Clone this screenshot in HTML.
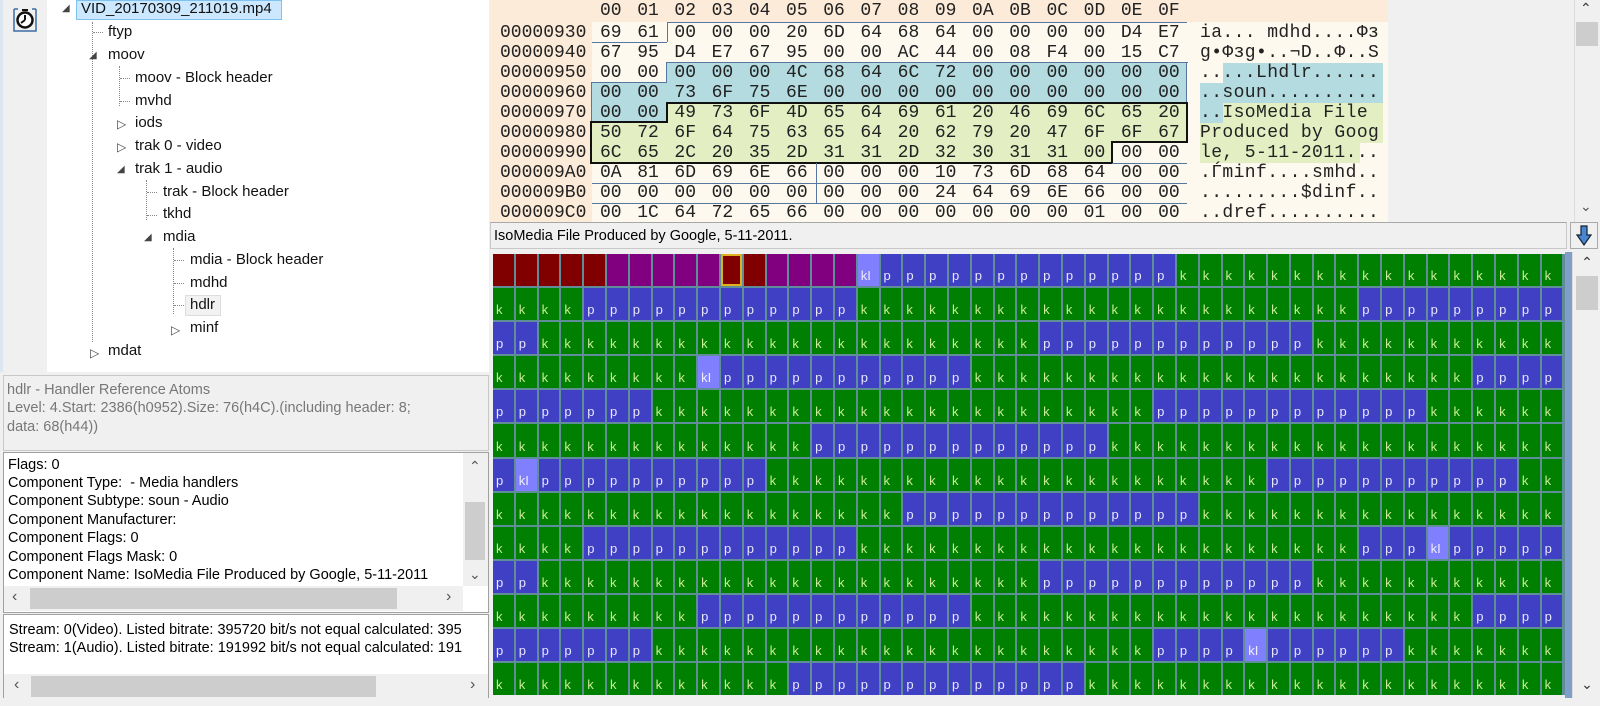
<!DOCTYPE html>
<html><head><meta charset="utf-8">
<style>
*{box-sizing:border-box;margin:0;padding:0}
body{width:1600px;height:706px;overflow:hidden;background:#f0f0f0;font-family:"Liberation Sans",sans-serif;position:relative}
.a{position:absolute}
.tree{left:0;top:0;width:489px;height:372px;background:#fff}
.strip{left:0;top:0;width:47px;height:372px;background:#f0f0f0;border-left:3px solid #dce6f0}
.t{position:absolute;font-size:15px;color:#111;white-space:nowrap;line-height:18px}
.dl{position:absolute;border-left:1px dotted #888}
.dh{position:absolute;border-top:1px dotted #888;width:10px}
.tri{position:absolute;font-size:10px;color:#444}
.txt{font-size:14.5px;white-space:nowrap;line-height:18.5px;position:absolute}
.hex{left:490px;top:0;width:898px;height:222px;background:#fdf9ee}
.mono{font-family:"Liberation Mono",monospace;font-size:18px;color:#222;white-space:pre;position:absolute;line-height:20px}
.g{left:493px;top:254px;width:1072px;display:grid;grid-template-columns:repeat(47,20.8px);grid-auto-rows:32.1px;gap:2px;background:#5f8d98;padding:0 0 0 0}
.g b{position:relative;font-weight:normal;font-size:13px;line-height:13px;display:block}
.g b span{position:absolute;left:3px;bottom:4px}
.D{background:#800000}.M{background:#800080}.k{background:#008000;color:#c8ec9a}.p{background:#4040c4;color:#e8e8ff}.L{background:#8080ff;color:#eef}
.S{background:#800000;outline:2px solid #e0b020;outline-offset:-2px}
.sb{background:#f0f0f0}
</style></head><body>

<!-- tree -->
<div class="a tree"></div>
<div class="a strip"></div>
<svg class="a" style="left:12px;top:5px" width="26" height="28" viewBox="0 0 26 28"><path d="M2 4h4M20 4h4M2 4v22h22V4" fill="none" stroke="#3a6ea5" stroke-width="1.5"/><circle cx="13" cy="15" r="7.5" fill="#fff" stroke="#111" stroke-width="2.5"/><path d="M13 15V10M13 15l-4 3M10 5h6" stroke="#111" stroke-width="2"/></svg>
<div class="a" style="left:76px;top:0;width:206px;height:20px;background:#cce8ff;border:1px solid #7dc2f0"></div>
<div class="tri" style="left:62px;top:3px">◢</div>
<div class="t" style="left:81px;top:0">VID_20170309_211019.mp4</div>
<div class="dl" style="left:92px;top:22px;height:320px"></div>
<div class="dh" style="left:93px;top:32px"></div>
<div class="t" style="left:108px;top:23px">ftyp</div>
<div class="tri" style="left:89px;top:50px">◢</div>
<div class="t" style="left:108px;top:46px">moov</div>
<div class="dl" style="left:119px;top:66px;height:40px"></div>
<div class="dh" style="left:120px;top:78px"></div><div class="t" style="left:135px;top:69px">moov - Block header</div>
<div class="dh" style="left:120px;top:101px"></div><div class="t" style="left:135px;top:92px">mvhd</div>
<div class="tri" style="left:117px;top:117px;font-size:12px">▷</div><div class="t" style="left:135px;top:114px">iods</div>
<div class="tri" style="left:117px;top:140px;font-size:12px">▷</div><div class="t" style="left:135px;top:137px">trak 0 - video</div>
<div class="tri" style="left:117px;top:164px">◢</div><div class="t" style="left:135px;top:160px">trak 1 - audio</div>
<div class="dl" style="left:146px;top:180px;height:40px"></div>
<div class="dh" style="left:147px;top:192px"></div><div class="t" style="left:163px;top:183px">trak - Block header</div>
<div class="dh" style="left:147px;top:215px"></div><div class="t" style="left:163px;top:205px">tkhd</div>
<div class="tri" style="left:144px;top:232px">◢</div><div class="t" style="left:163px;top:228px">mdia</div>
<div class="dl" style="left:173px;top:248px;height:66px"></div>
<div class="dh" style="left:174px;top:260px"></div><div class="t" style="left:190px;top:251px">mdia - Block header</div>
<div class="dh" style="left:174px;top:283px"></div><div class="t" style="left:190px;top:274px">mdhd</div>
<div class="a" style="left:185px;top:295px;width:36px;height:21px;background:#f2f2f2;border:1px solid #ddd"></div>
<div class="dh" style="left:174px;top:305px"></div><div class="t" style="left:190px;top:296px">hdlr</div>
<div class="tri" style="left:171px;top:323px;font-size:12px">▷</div><div class="t" style="left:190px;top:319px">minf</div>
<div class="tri" style="left:90px;top:346px;font-size:12px">▷</div><div class="t" style="left:108px;top:342px">mdat</div>

<!-- info -->
<div class="a" style="left:3px;top:375px;width:486px;height:76px;background:#f0f0f0;border:1px solid #c8c8c8"></div>
<div class="txt" style="left:7px;top:381px;color:#777">hdlr - Handler Reference Atoms</div>
<div class="txt" style="left:7px;top:399px;color:#777">Level: 4.Start: 2386(h0952).Size: 76(h4C).(including header: 8;</div>
<div class="txt" style="left:7px;top:418px;color:#777">data: 68(h44))</div>

<!-- props -->
<div class="a" style="left:3px;top:452px;width:486px;height:161px;background:#fff;border:1px solid #a0a0a0"></div>
<div class="txt" style="left:8px;top:456px">Flags: 0</div>
<div class="txt" style="left:8px;top:474px">Component Type: &nbsp;- Media handlers</div>
<div class="txt" style="left:8px;top:492px">Component Subtype: soun - Audio</div>
<div class="txt" style="left:8px;top:511px">Component Manufacturer:</div>
<div class="txt" style="left:8px;top:529px">Component Flags: 0</div>
<div class="txt" style="left:8px;top:548px">Component Flags Mask: 0</div>
<div class="txt" style="left:8px;top:566px">Component Name: IsoMedia File Produced by Google, 5-11-2011</div>
<div class="a sb" style="left:463px;top:453px;width:25px;height:133px"></div>
<div class="a" style="left:465px;top:502px;width:20px;height:58px;background:#cdcdcd"></div>
<div class="a" style="left:469px;top:458px;font-size:14px;color:#555">&#8963;</div>
<div class="a" style="left:469px;top:566px;font-size:14px;color:#555">&#8964;</div>
<div class="a sb" style="left:4px;top:586px;width:459px;height:25px"></div>
<div class="a" style="left:30px;top:588px;width:367px;height:21px;background:#cdcdcd"></div>
<div class="a" style="left:12px;top:588px;font-size:16px;color:#555">‹</div>
<div class="a" style="left:446px;top:588px;font-size:16px;color:#555">›</div>

<!-- stream -->
<div class="a" style="left:3px;top:614px;width:486px;height:88px;background:#fff;border:1px solid #a0a0a0;overflow:hidden">
<div class="txt" style="left:5px;top:6px">Stream: 0(Video). Listed bitrate: 395720 bit/s not equal calculated: 395</div>
<div class="txt" style="left:5px;top:24px">Stream: 1(Audio). Listed bitrate: 191992 bit/s not equal calculated: 191</div>
<div class="a sb" style="left:0;top:59px;width:486px;height:25px"></div>
<div class="a" style="left:27px;top:61px;width:345px;height:21px;background:#cdcdcd"></div>
<div class="a" style="left:10px;top:61px;font-size:16px;color:#555">‹</div>
<div class="a" style="left:466px;top:61px;font-size:16px;color:#555">›</div>
</div>

<!-- hex panel -->
<div class="a hex"></div>
<div class="a" style="left:490px;top:0;width:898px;height:22px;background:#fcebd9"></div>
<div class="a" style="left:490px;top:0;width:102px;height:222px;background:#fcebd9"></div>
<!-- highlights hex -->
<div class="a" style="left:667px;top:63px;width:520px;height:20px;background:#b3dbe0"></div>
<div class="a" style="left:592px;top:83px;width:595px;height:20px;background:#b3dbe0"></div>
<div class="a" style="left:592px;top:103px;width:75px;height:20px;background:#b3dbe0"></div>
<div class="a" style="left:667px;top:103px;width:520px;height:20px;background:#e3efc2"></div>
<div class="a" style="left:592px;top:123px;width:595px;height:40px;background:#e3efc2"></div>
<div class="a" style="left:1112px;top:143px;width:75px;height:20px;background:#fdf9ee"></div>
<!-- blue outline -->
<div class="a" style="left:667px;top:62px;width:521px;border-top:1.5px solid #5577a0"></div>
<div class="a" style="left:666px;top:62px;height:21px;border-left:1.5px solid #5577a0"></div>
<div class="a" style="left:591px;top:82px;width:76px;border-top:1.5px solid #5577a0"></div>
<div class="a" style="left:591px;top:82px;height:41px;border-left:1.5px solid #5577a0"></div>
<div class="a" style="left:1186px;top:62px;height:41px;border-left:1.5px solid #5577a0"></div>
<!-- black outline green -->
<div class="a" style="left:666px;top:102px;width:522px;height:21px;border:2px solid #111;border-bottom:none"></div>
<div class="a" style="left:590px;top:121px;width:78px;border-top:2px solid #111"></div>
<div class="a" style="left:590px;top:121px;height:43px;border-left:2px solid #111"></div>
<div class="a" style="left:1186px;top:121px;height:22px;border-left:2px solid #111"></div>
<div class="a" style="left:590px;top:162px;width:523px;border-top:2px solid #111"></div>
<div class="a" style="left:1111px;top:141px;height:23px;border-left:2px solid #111"></div>
<div class="a" style="left:1111px;top:141px;width:77px;border-top:2px solid #111"></div>
<!-- misc lines -->
<div class="a" style="left:592px;top:42px;width:75px;border-top:1px solid #5577a0"></div>
<div class="a" style="left:667px;top:22px;height:20px;border-left:1px solid #5577a0"></div>
<div class="a" style="left:667px;top:22px;width:520px;border-top:1px solid #5577a0"></div>
<div class="a" style="left:1112px;top:163px;width:75px;border-top:1px solid #5577a0"></div>
<div class="a" style="left:592px;top:183px;width:595px;border-top:1px solid #5577a0"></div>
<div class="a" style="left:592px;top:203px;width:595px;border-top:1px solid #5577a0"></div>
<div class="a" style="left:816px;top:163px;height:40px;border-left:1px solid #5577a0"></div>
<!-- ascii highlights -->
<div class="a" style="left:1223px;top:63px;width:160px;height:20px;background:#b3dbe0"></div>
<div class="a" style="left:1200px;top:83px;width:183px;height:20px;background:#b3dbe0"></div>
<div class="a" style="left:1200px;top:103px;width:23px;height:20px;background:#b3dbe0"></div>
<div class="a" style="left:1223px;top:103px;width:160px;height:20px;background:#e3efc2"></div>
<div class="a" style="left:1200px;top:123px;width:183px;height:20px;background:#e3efc2"></div>
<div class="a" style="left:1200px;top:143px;width:160px;height:20px;background:#e3efc2"></div>

<div class="mono" style="left:600px;top:1px;word-spacing:4.8px">00 01 02 03 04 05 06 07 08 09 0A 0B 0C 0D 0E 0F</div>
<div class="mono" style="left:500px;top:23px">00000930
00000940
00000950
00000960
00000970
00000980
00000990
000009A0
000009B0
000009C0</div>
<div class="mono" style="left:600px;top:23px;word-spacing:4.8px">69 61 00 00 00 20 6D 64 68 64 00 00 00 00 D4 E7
67 95 D4 E7 67 95 00 00 AC 44 00 08 F4 00 15 C7
00 00 00 00 00 4C 68 64 6C 72 00 00 00 00 00 00
00 00 73 6F 75 6E 00 00 00 00 00 00 00 00 00 00
00 00 49 73 6F 4D 65 64 69 61 20 46 69 6C 65 20
50 72 6F 64 75 63 65 64 20 62 79 20 47 6F 6F 67
6C 65 2C 20 35 2D 31 31 2D 32 30 31 31 00 00 00
0A 81 6D 69 6E 66 00 00 00 10 73 6D 68 64 00 00
00 00 00 00 00 00 00 00 00 24 64 69 6E 66 00 00
00 1C 64 72 65 66 00 00 00 00 00 00 00 01 00 00</div>
<div class="mono" style="left:1200px;top:23px;letter-spacing:0.4px">ia... mdhd....Φз
g•Φзg•..¬D..Φ..Ѕ
.....Lhdlr......
..soun..........
..IsoMedia File 
Produced by Goog
le, 5-11-2011...
.Ѓminf....smhd..
.........$dinf..
..dref..........</div>

<!-- right scrollbar top -->
<div class="a" style="left:1574px;top:0;width:26px;height:222px;background:#f0f0f0;border-left:1px solid #ddd"></div>
<div class="a" style="left:1576px;top:22px;width:22px;height:24px;background:#cdcdcd"></div>
<div class="a" style="left:1580px;top:0;font-size:14px;color:#333">&#8963;</div>
<div class="a" style="left:1580px;top:198px;font-size:14px;color:#555">&#8964;</div>

<!-- status bar -->
<div class="a" style="left:490px;top:222px;width:1077px;height:27px;background:#f0f0f0;border:1px solid #c8c8c8;border-top-color:#a8a8a8"></div>
<div class="txt" style="left:494px;top:227px;font-size:14.5px">IsoMedia File Produced by Google, 5-11-2011.</div>
<div class="a" style="left:1570px;top:222px;width:28px;height:27px;background:#f0f0f0;border:1px solid #aaa"></div>
<svg class="a" style="left:1576px;top:225px" width="16" height="22" viewBox="0 0 16 22"><path d="M5 1h6v9h4L8 20 1 10h4z" fill="#4a86d0" stroke="#123" stroke-width="1.2"/></svg>

<!-- grid -->
<div class="a g">
<b class=D></b><b class=D></b><b class=D></b><b class=D></b><b class=D></b><b class=M></b><b class=M></b><b class=M></b><b class=M></b><b class=M></b><b class=S></b><b class=D></b><b class=M></b><b class=M></b><b class=M></b><b class=M></b><b class=L><span>kI</span></b><b class=p><span>p</span></b><b class=p><span>p</span></b><b class=p><span>p</span></b><b class=p><span>p</span></b><b class=p><span>p</span></b><b class=p><span>p</span></b><b class=p><span>p</span></b><b class=p><span>p</span></b><b class=p><span>p</span></b><b class=p><span>p</span></b><b class=p><span>p</span></b><b class=p><span>p</span></b><b class=p><span>p</span></b><b class=k><span>k</span></b><b class=k><span>k</span></b><b class=k><span>k</span></b><b class=k><span>k</span></b><b class=k><span>k</span></b><b class=k><span>k</span></b><b class=k><span>k</span></b><b class=k><span>k</span></b><b class=k><span>k</span></b><b class=k><span>k</span></b><b class=k><span>k</span></b><b class=k><span>k</span></b><b class=k><span>k</span></b><b class=k><span>k</span></b><b class=k><span>k</span></b><b class=k><span>k</span></b><b class=k><span>k</span></b>
<b class=k><span>k</span></b><b class=k><span>k</span></b><b class=k><span>k</span></b><b class=k><span>k</span></b><b class=p><span>p</span></b><b class=p><span>p</span></b><b class=p><span>p</span></b><b class=p><span>p</span></b><b class=p><span>p</span></b><b class=p><span>p</span></b><b class=p><span>p</span></b><b class=p><span>p</span></b><b class=p><span>p</span></b><b class=p><span>p</span></b><b class=p><span>p</span></b><b class=p><span>p</span></b><b class=k><span>k</span></b><b class=k><span>k</span></b><b class=k><span>k</span></b><b class=k><span>k</span></b><b class=k><span>k</span></b><b class=k><span>k</span></b><b class=k><span>k</span></b><b class=k><span>k</span></b><b class=k><span>k</span></b><b class=k><span>k</span></b><b class=k><span>k</span></b><b class=k><span>k</span></b><b class=k><span>k</span></b><b class=k><span>k</span></b><b class=k><span>k</span></b><b class=k><span>k</span></b><b class=k><span>k</span></b><b class=k><span>k</span></b><b class=k><span>k</span></b><b class=k><span>k</span></b><b class=k><span>k</span></b><b class=k><span>k</span></b><b class=p><span>p</span></b><b class=p><span>p</span></b><b class=p><span>p</span></b><b class=p><span>p</span></b><b class=p><span>p</span></b><b class=p><span>p</span></b><b class=p><span>p</span></b><b class=p><span>p</span></b><b class=p><span>p</span></b>
<b class=p><span>p</span></b><b class=p><span>p</span></b><b class=k><span>k</span></b><b class=k><span>k</span></b><b class=k><span>k</span></b><b class=k><span>k</span></b><b class=k><span>k</span></b><b class=k><span>k</span></b><b class=k><span>k</span></b><b class=k><span>k</span></b><b class=k><span>k</span></b><b class=k><span>k</span></b><b class=k><span>k</span></b><b class=k><span>k</span></b><b class=k><span>k</span></b><b class=k><span>k</span></b><b class=k><span>k</span></b><b class=k><span>k</span></b><b class=k><span>k</span></b><b class=k><span>k</span></b><b class=k><span>k</span></b><b class=k><span>k</span></b><b class=k><span>k</span></b><b class=k><span>k</span></b><b class=p><span>p</span></b><b class=p><span>p</span></b><b class=p><span>p</span></b><b class=p><span>p</span></b><b class=p><span>p</span></b><b class=p><span>p</span></b><b class=p><span>p</span></b><b class=p><span>p</span></b><b class=p><span>p</span></b><b class=p><span>p</span></b><b class=p><span>p</span></b><b class=p><span>p</span></b><b class=k><span>k</span></b><b class=k><span>k</span></b><b class=k><span>k</span></b><b class=k><span>k</span></b><b class=k><span>k</span></b><b class=k><span>k</span></b><b class=k><span>k</span></b><b class=k><span>k</span></b><b class=k><span>k</span></b><b class=k><span>k</span></b><b class=k><span>k</span></b>
<b class=k><span>k</span></b><b class=k><span>k</span></b><b class=k><span>k</span></b><b class=k><span>k</span></b><b class=k><span>k</span></b><b class=k><span>k</span></b><b class=k><span>k</span></b><b class=k><span>k</span></b><b class=k><span>k</span></b><b class=L><span>kI</span></b><b class=p><span>p</span></b><b class=p><span>p</span></b><b class=p><span>p</span></b><b class=p><span>p</span></b><b class=p><span>p</span></b><b class=p><span>p</span></b><b class=p><span>p</span></b><b class=p><span>p</span></b><b class=p><span>p</span></b><b class=p><span>p</span></b><b class=p><span>p</span></b><b class=k><span>k</span></b><b class=k><span>k</span></b><b class=k><span>k</span></b><b class=k><span>k</span></b><b class=k><span>k</span></b><b class=k><span>k</span></b><b class=k><span>k</span></b><b class=k><span>k</span></b><b class=k><span>k</span></b><b class=k><span>k</span></b><b class=k><span>k</span></b><b class=k><span>k</span></b><b class=k><span>k</span></b><b class=k><span>k</span></b><b class=k><span>k</span></b><b class=k><span>k</span></b><b class=k><span>k</span></b><b class=k><span>k</span></b><b class=k><span>k</span></b><b class=k><span>k</span></b><b class=k><span>k</span></b><b class=k><span>k</span></b><b class=p><span>p</span></b><b class=p><span>p</span></b><b class=p><span>p</span></b><b class=p><span>p</span></b>
<b class=p><span>p</span></b><b class=p><span>p</span></b><b class=p><span>p</span></b><b class=p><span>p</span></b><b class=p><span>p</span></b><b class=p><span>p</span></b><b class=p><span>p</span></b><b class=k><span>k</span></b><b class=k><span>k</span></b><b class=k><span>k</span></b><b class=k><span>k</span></b><b class=k><span>k</span></b><b class=k><span>k</span></b><b class=k><span>k</span></b><b class=k><span>k</span></b><b class=k><span>k</span></b><b class=k><span>k</span></b><b class=k><span>k</span></b><b class=k><span>k</span></b><b class=k><span>k</span></b><b class=k><span>k</span></b><b class=k><span>k</span></b><b class=k><span>k</span></b><b class=k><span>k</span></b><b class=k><span>k</span></b><b class=k><span>k</span></b><b class=k><span>k</span></b><b class=k><span>k</span></b><b class=k><span>k</span></b><b class=p><span>p</span></b><b class=p><span>p</span></b><b class=p><span>p</span></b><b class=p><span>p</span></b><b class=p><span>p</span></b><b class=p><span>p</span></b><b class=p><span>p</span></b><b class=p><span>p</span></b><b class=p><span>p</span></b><b class=p><span>p</span></b><b class=p><span>p</span></b><b class=p><span>p</span></b><b class=k><span>k</span></b><b class=k><span>k</span></b><b class=k><span>k</span></b><b class=k><span>k</span></b><b class=k><span>k</span></b><b class=k><span>k</span></b>
<b class=k><span>k</span></b><b class=k><span>k</span></b><b class=k><span>k</span></b><b class=k><span>k</span></b><b class=k><span>k</span></b><b class=k><span>k</span></b><b class=k><span>k</span></b><b class=k><span>k</span></b><b class=k><span>k</span></b><b class=k><span>k</span></b><b class=k><span>k</span></b><b class=k><span>k</span></b><b class=k><span>k</span></b><b class=k><span>k</span></b><b class=p><span>p</span></b><b class=p><span>p</span></b><b class=p><span>p</span></b><b class=p><span>p</span></b><b class=p><span>p</span></b><b class=p><span>p</span></b><b class=p><span>p</span></b><b class=p><span>p</span></b><b class=p><span>p</span></b><b class=p><span>p</span></b><b class=p><span>p</span></b><b class=p><span>p</span></b><b class=p><span>p</span></b><b class=k><span>k</span></b><b class=k><span>k</span></b><b class=k><span>k</span></b><b class=k><span>k</span></b><b class=k><span>k</span></b><b class=k><span>k</span></b><b class=k><span>k</span></b><b class=k><span>k</span></b><b class=k><span>k</span></b><b class=k><span>k</span></b><b class=k><span>k</span></b><b class=k><span>k</span></b><b class=k><span>k</span></b><b class=k><span>k</span></b><b class=k><span>k</span></b><b class=k><span>k</span></b><b class=k><span>k</span></b><b class=k><span>k</span></b><b class=k><span>k</span></b><b class=k><span>k</span></b>
<b class=p><span>p</span></b><b class=L><span>kI</span></b><b class=p><span>p</span></b><b class=p><span>p</span></b><b class=p><span>p</span></b><b class=p><span>p</span></b><b class=p><span>p</span></b><b class=p><span>p</span></b><b class=p><span>p</span></b><b class=p><span>p</span></b><b class=p><span>p</span></b><b class=p><span>p</span></b><b class=k><span>k</span></b><b class=k><span>k</span></b><b class=k><span>k</span></b><b class=k><span>k</span></b><b class=k><span>k</span></b><b class=k><span>k</span></b><b class=k><span>k</span></b><b class=k><span>k</span></b><b class=k><span>k</span></b><b class=k><span>k</span></b><b class=k><span>k</span></b><b class=k><span>k</span></b><b class=k><span>k</span></b><b class=k><span>k</span></b><b class=k><span>k</span></b><b class=k><span>k</span></b><b class=k><span>k</span></b><b class=k><span>k</span></b><b class=k><span>k</span></b><b class=k><span>k</span></b><b class=k><span>k</span></b><b class=k><span>k</span></b><b class=p><span>p</span></b><b class=p><span>p</span></b><b class=p><span>p</span></b><b class=p><span>p</span></b><b class=p><span>p</span></b><b class=p><span>p</span></b><b class=p><span>p</span></b><b class=p><span>p</span></b><b class=p><span>p</span></b><b class=p><span>p</span></b><b class=p><span>p</span></b><b class=k><span>k</span></b><b class=k><span>k</span></b>
<b class=k><span>k</span></b><b class=k><span>k</span></b><b class=k><span>k</span></b><b class=k><span>k</span></b><b class=k><span>k</span></b><b class=k><span>k</span></b><b class=k><span>k</span></b><b class=k><span>k</span></b><b class=k><span>k</span></b><b class=k><span>k</span></b><b class=k><span>k</span></b><b class=k><span>k</span></b><b class=k><span>k</span></b><b class=k><span>k</span></b><b class=k><span>k</span></b><b class=k><span>k</span></b><b class=k><span>k</span></b><b class=k><span>k</span></b><b class=p><span>p</span></b><b class=p><span>p</span></b><b class=p><span>p</span></b><b class=p><span>p</span></b><b class=p><span>p</span></b><b class=p><span>p</span></b><b class=p><span>p</span></b><b class=p><span>p</span></b><b class=p><span>p</span></b><b class=p><span>p</span></b><b class=p><span>p</span></b><b class=p><span>p</span></b><b class=p><span>p</span></b><b class=k><span>k</span></b><b class=k><span>k</span></b><b class=k><span>k</span></b><b class=k><span>k</span></b><b class=k><span>k</span></b><b class=k><span>k</span></b><b class=k><span>k</span></b><b class=k><span>k</span></b><b class=k><span>k</span></b><b class=k><span>k</span></b><b class=k><span>k</span></b><b class=k><span>k</span></b><b class=k><span>k</span></b><b class=k><span>k</span></b><b class=k><span>k</span></b><b class=k><span>k</span></b>
<b class=k><span>k</span></b><b class=k><span>k</span></b><b class=k><span>k</span></b><b class=k><span>k</span></b><b class=p><span>p</span></b><b class=p><span>p</span></b><b class=p><span>p</span></b><b class=p><span>p</span></b><b class=p><span>p</span></b><b class=p><span>p</span></b><b class=p><span>p</span></b><b class=p><span>p</span></b><b class=p><span>p</span></b><b class=p><span>p</span></b><b class=p><span>p</span></b><b class=p><span>p</span></b><b class=k><span>k</span></b><b class=k><span>k</span></b><b class=k><span>k</span></b><b class=k><span>k</span></b><b class=k><span>k</span></b><b class=k><span>k</span></b><b class=k><span>k</span></b><b class=k><span>k</span></b><b class=k><span>k</span></b><b class=k><span>k</span></b><b class=k><span>k</span></b><b class=k><span>k</span></b><b class=k><span>k</span></b><b class=k><span>k</span></b><b class=k><span>k</span></b><b class=k><span>k</span></b><b class=k><span>k</span></b><b class=k><span>k</span></b><b class=k><span>k</span></b><b class=k><span>k</span></b><b class=k><span>k</span></b><b class=k><span>k</span></b><b class=p><span>p</span></b><b class=p><span>p</span></b><b class=p><span>p</span></b><b class=L><span>kI</span></b><b class=p><span>p</span></b><b class=p><span>p</span></b><b class=p><span>p</span></b><b class=p><span>p</span></b><b class=p><span>p</span></b>
<b class=p><span>p</span></b><b class=p><span>p</span></b><b class=k><span>k</span></b><b class=k><span>k</span></b><b class=k><span>k</span></b><b class=k><span>k</span></b><b class=k><span>k</span></b><b class=k><span>k</span></b><b class=k><span>k</span></b><b class=k><span>k</span></b><b class=k><span>k</span></b><b class=k><span>k</span></b><b class=k><span>k</span></b><b class=k><span>k</span></b><b class=k><span>k</span></b><b class=k><span>k</span></b><b class=k><span>k</span></b><b class=k><span>k</span></b><b class=k><span>k</span></b><b class=k><span>k</span></b><b class=k><span>k</span></b><b class=k><span>k</span></b><b class=k><span>k</span></b><b class=k><span>k</span></b><b class=p><span>p</span></b><b class=p><span>p</span></b><b class=p><span>p</span></b><b class=p><span>p</span></b><b class=p><span>p</span></b><b class=p><span>p</span></b><b class=p><span>p</span></b><b class=p><span>p</span></b><b class=p><span>p</span></b><b class=p><span>p</span></b><b class=p><span>p</span></b><b class=p><span>p</span></b><b class=k><span>k</span></b><b class=k><span>k</span></b><b class=k><span>k</span></b><b class=k><span>k</span></b><b class=k><span>k</span></b><b class=k><span>k</span></b><b class=k><span>k</span></b><b class=k><span>k</span></b><b class=k><span>k</span></b><b class=k><span>k</span></b><b class=k><span>k</span></b>
<b class=k><span>k</span></b><b class=k><span>k</span></b><b class=k><span>k</span></b><b class=k><span>k</span></b><b class=k><span>k</span></b><b class=k><span>k</span></b><b class=k><span>k</span></b><b class=k><span>k</span></b><b class=k><span>k</span></b><b class=p><span>p</span></b><b class=p><span>p</span></b><b class=p><span>p</span></b><b class=p><span>p</span></b><b class=p><span>p</span></b><b class=p><span>p</span></b><b class=p><span>p</span></b><b class=p><span>p</span></b><b class=p><span>p</span></b><b class=p><span>p</span></b><b class=p><span>p</span></b><b class=p><span>p</span></b><b class=k><span>k</span></b><b class=k><span>k</span></b><b class=k><span>k</span></b><b class=k><span>k</span></b><b class=k><span>k</span></b><b class=k><span>k</span></b><b class=k><span>k</span></b><b class=k><span>k</span></b><b class=k><span>k</span></b><b class=k><span>k</span></b><b class=k><span>k</span></b><b class=k><span>k</span></b><b class=k><span>k</span></b><b class=k><span>k</span></b><b class=k><span>k</span></b><b class=k><span>k</span></b><b class=k><span>k</span></b><b class=k><span>k</span></b><b class=k><span>k</span></b><b class=k><span>k</span></b><b class=k><span>k</span></b><b class=k><span>k</span></b><b class=p><span>p</span></b><b class=p><span>p</span></b><b class=p><span>p</span></b><b class=p><span>p</span></b>
<b class=p><span>p</span></b><b class=p><span>p</span></b><b class=p><span>p</span></b><b class=p><span>p</span></b><b class=p><span>p</span></b><b class=p><span>p</span></b><b class=p><span>p</span></b><b class=k><span>k</span></b><b class=k><span>k</span></b><b class=k><span>k</span></b><b class=k><span>k</span></b><b class=k><span>k</span></b><b class=k><span>k</span></b><b class=k><span>k</span></b><b class=k><span>k</span></b><b class=k><span>k</span></b><b class=k><span>k</span></b><b class=k><span>k</span></b><b class=k><span>k</span></b><b class=k><span>k</span></b><b class=k><span>k</span></b><b class=k><span>k</span></b><b class=k><span>k</span></b><b class=k><span>k</span></b><b class=k><span>k</span></b><b class=k><span>k</span></b><b class=k><span>k</span></b><b class=k><span>k</span></b><b class=k><span>k</span></b><b class=p><span>p</span></b><b class=p><span>p</span></b><b class=p><span>p</span></b><b class=p><span>p</span></b><b class=L><span>kI</span></b><b class=p><span>p</span></b><b class=p><span>p</span></b><b class=p><span>p</span></b><b class=p><span>p</span></b><b class=p><span>p</span></b><b class=p><span>p</span></b><b class=k><span>k</span></b><b class=k><span>k</span></b><b class=k><span>k</span></b><b class=k><span>k</span></b><b class=k><span>k</span></b><b class=k><span>k</span></b><b class=k><span>k</span></b>
<b class=k><span>k</span></b><b class=k><span>k</span></b><b class=k><span>k</span></b><b class=k><span>k</span></b><b class=k><span>k</span></b><b class=k><span>k</span></b><b class=k><span>k</span></b><b class=k><span>k</span></b><b class=k><span>k</span></b><b class=k><span>k</span></b><b class=k><span>k</span></b><b class=k><span>k</span></b><b class=k><span>k</span></b><b class=p><span>p</span></b><b class=p><span>p</span></b><b class=p><span>p</span></b><b class=p><span>p</span></b><b class=p><span>p</span></b><b class=p><span>p</span></b><b class=p><span>p</span></b><b class=p><span>p</span></b><b class=p><span>p</span></b><b class=p><span>p</span></b><b class=p><span>p</span></b><b class=p><span>p</span></b><b class=p><span>p</span></b><b class=k><span>k</span></b><b class=k><span>k</span></b><b class=k><span>k</span></b><b class=k><span>k</span></b><b class=k><span>k</span></b><b class=k><span>k</span></b><b class=k><span>k</span></b><b class=k><span>k</span></b><b class=k><span>k</span></b><b class=k><span>k</span></b><b class=k><span>k</span></b><b class=k><span>k</span></b><b class=k><span>k</span></b><b class=k><span>k</span></b><b class=k><span>k</span></b><b class=k><span>k</span></b><b class=k><span>k</span></b><b class=k><span>k</span></b><b class=k><span>k</span></b><b class=k><span>k</span></b><b class=k><span>k</span></b>
</div>
<div class="a" style="left:1565px;top:252px;width:7px;height:446px;background:#7f9fc8"></div>
<div class="a" style="left:1572px;top:252px;width:28px;height:446px;background:#f0f0f0;border-left:1px solid #ddd"></div>
<div class="a" style="left:1577px;top:254px;width:20px;font-size:14px;color:#333;text-align:center">&#8963;</div>
<div class="a" style="left:1576px;top:276px;width:22px;height:34px;background:#cdcdcd"></div>
<div class="a" style="left:1577px;top:676px;width:20px;font-size:14px;color:#333;text-align:center">&#8964;</div>
<div class="a" style="left:0;top:698px;width:1600px;height:8px;background:#f0f0f0"></div>
</body></html>
